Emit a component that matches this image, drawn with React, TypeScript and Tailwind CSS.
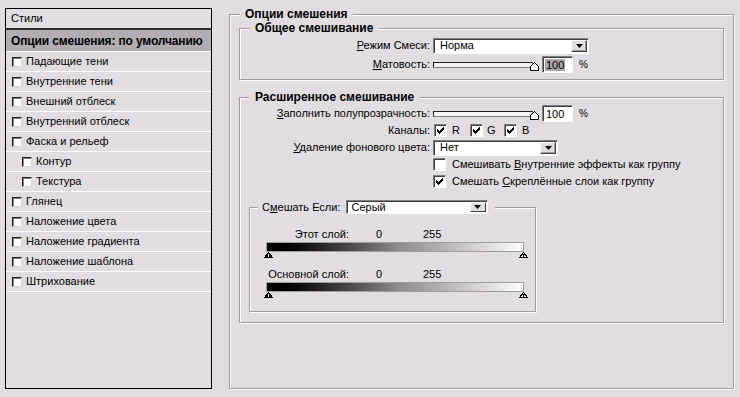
import React from 'react';

const effects = [
  { label: 'Падающие тени' },
  { label: 'Внутренние тени' },
  { label: 'Внешний отблеск' },
  { label: 'Внутренний отблеск' },
  { label: 'Фаска и рельеф' },
  { label: 'Контур', sub: true },
  { label: 'Текстура', sub: true },
  { label: 'Глянец' },
  { label: 'Наложение цвета' },
  { label: 'Наложение градиента' },
  { label: 'Наложение шаблона' },
  { label: 'Штрихование' },
];

// pixel check mark, 7x7
const checkCols = [2, 3, 4, 3, 2, 1, 0];

function SmallBox() {
  return (
    <span className="w-[10px] h-[10px] shrink-0 bg-white border border-t-[#202020] border-l-[#202020] border-r-[#d8d4d8] border-b-[#d8d4d8] shadow-[inset_1px_1px_0_#808080]" />
  );
}

function CheckBox({ checked }: { checked?: boolean }) {
  return (
    <span className="w-[13px] h-[13px] shrink-0 bg-white border border-t-[#808080] border-l-[#808080] border-r-white border-b-white shadow-[inset_1px_1px_0_#404040] flex items-center justify-center">
      {checked && (
        <svg width="7" height="7" viewBox="0 0 7 7" shapeRendering="crispEdges">
          {checkCols.map((y, x) => (
            <rect key={x} x={x} y={y} width="1" height="3" fill="#000" />
          ))}
        </svg>
      )}
    </span>
  );
}

function DropButton() {
  return (
    <span className="w-[16px] h-[12px] mr-[1px] bg-[#e1dde1] border border-t-white border-l-white border-r-[#404040] border-b-[#404040] shadow-[inset_-1px_-1px_0_#a09ca0] flex items-center justify-center">
      <svg width="7" height="4" viewBox="0 0 7 4">
        <polygon points="0,0 7,0 3.5,4" fill="#000" />
      </svg>
    </span>
  );
}

function Slider() {
  return (
    <span className="relative ml-[3px] w-[106px] h-[17px] flex items-center">
      <span className="w-[100px] h-[6px] bg-[#f4f2f4] border border-t-[#202020] border-l-[#202020] border-r-[#808080] border-b-[#808080]" />
      <svg className="absolute right-0 top-[6px]" width="9" height="9" viewBox="0 0 9 9" shapeRendering="crispEdges">
        <polygon points="0.5,4.5 4.5,0.5 8.5,4.5 8.5,8.5 0.5,8.5" fill="#fff" stroke="#000" strokeWidth="1" />
      </svg>
    </span>
  );
}

function NumBox({ selected }: { selected?: boolean }) {
  return (
    <>
      <span className="ml-[3px] w-[31px] h-[17px] bg-white border border-t-[#808080] border-l-[#808080] border-r-white border-b-white shadow-[inset_1px_1px_0_#404040] flex items-center pl-[2px]">
        <span className={selected ? 'bg-[#aaa6aa] px-[1px] leading-[12px]' : 'px-[1px] leading-[12px]'}>100</span>
      </span>
      <span className="ml-[6px] text-[10px]">%</span>
    </>
  );
}

function Marker({ filled }: { filled?: boolean }) {
  return (
    <svg width="9" height="6" viewBox="0 0 9 6" shapeRendering="crispEdges">
      <polygon points="4.5,0.5 8.5,5.5 0.5,5.5" fill={filled ? '#000' : '#fff'} stroke="#000" strokeWidth="1" />
      <rect x="4" y="2" width="1" height="3" fill={filled ? '#fff' : '#000'} />
    </svg>
  );
}

function BlendBar({ label }: { label: string }) {
  return (
    <>
      <div className="flex h-[14px] leading-[14px]">
        <span className="w-[85px] text-right">{label}</span>
        <span className="ml-[27px] w-[47px]">0</span>
        <span>255</span>
      </div>
      <div className="ml-[2px] mt-[1px] w-[258px] h-[10px] border border-[#a09ca0] bg-linear-to-r from-black via-[#8c888c] to-white" />
      <div className="w-[264px] h-[7px] flex justify-between items-start">
        <Marker filled />
        <Marker />
      </div>
    </>
  );
}

export default function App() {
  return (
    <div className="w-[740px] h-[397px] overflow-hidden bg-[#e1dde1] flex items-start pl-[5px] pt-[7px] text-[11px] text-black font-['Liberation_Sans',Arial,sans-serif]">
      {/* styles list */}
      <div className="w-[207px] h-[381px] mt-[1px] border border-black flex flex-col">
        <div className="h-[21px] pl-[5px] flex items-center border-b-2 border-[#303030]">Стили</div>
        <div className="h-[22px] pl-[5px] flex items-center bg-[#b1adb1] border-b border-white font-bold text-[12px] tracking-[-0.15px]">
          Опции смешения: по умолчанию
        </div>
        {effects.map((e) => (
          <div
            key={e.label}
            className={`h-[20px] flex items-center gap-[4px] border-b border-white ${e.sub ? 'pl-[16px]' : 'pl-[6px]'}`}
          >
            <SmallBox />
            <span>{e.label}</span>
          </div>
        ))}
      </div>

      {/* blending options */}
      <fieldset className="ml-[17px] w-[505px] h-[382px] border border-[#a09ca0] shadow-[1px_1px_0_#fff,inset_1px_1px_0_#fff]">
        <legend className="ml-[10px] px-[5px] bg-[#e1dde1] font-bold text-[12px] leading-[14px]">Опции смешения</legend>
        <div className="px-[9px] flex flex-col gap-[10px]">
          <fieldset className="border border-[#a09ca0] shadow-[1px_1px_0_#fff,inset_1px_1px_0_#fff]">
            <legend className="ml-[9px] px-[6px] bg-[#e1dde1] font-bold text-[12px] leading-[14px]">Общее смешивание</legend>
            <div className="pt-[2px] pb-[6px] flex flex-col gap-[2px]">
              <div className="h-[17px] flex items-center">
                <span className="w-[190px] text-right">
                  <u>Р</u>ежим Смеси:
                </span>
                <span className="ml-[3px] w-[156px] h-[16px] bg-white border border-t-[#808080] border-l-[#808080] border-r-white border-b-white shadow-[inset_1px_1px_0_#404040] flex items-center justify-between pl-[6px]">
                  <span>Норма</span>
                  <DropButton />
                </span>
              </div>
              <div className="h-[17px] flex items-center">
                <span className="w-[190px] text-right">
                  <u>М</u>атовость:
                </span>
                <Slider />
                <NumBox selected />
              </div>
            </div>
          </fieldset>

          <fieldset className="border border-[#a09ca0] shadow-[1px_1px_0_#fff,inset_1px_1px_0_#fff]">
            <legend className="ml-[9px] px-[6px] bg-[#e1dde1] font-bold text-[12px] leading-[14px]">Расширенное смешивание</legend>
            <div className="pt-[1px] pb-[10px] flex flex-col">
              <div className="h-[17px] flex items-center">
                <span className="w-[190px] text-right">
                  <u>З</u>аполнить полупрозрачность:
                </span>
                <Slider />
                <NumBox />
              </div>
              <div className="h-[17px] flex items-center">
                <span className="w-[190px] text-right">Каналы:</span>
                <span className="ml-[4px] flex items-center">
                  <CheckBox checked />
                  <span className="ml-[5px] w-[18px]">R</span>
                  <CheckBox checked />
                  <span className="ml-[4px] w-[17px]">G</span>
                  <CheckBox checked />
                  <span className="ml-[5px]">B</span>
                </span>
              </div>
              <div className="h-[17px] flex items-center">
                <span className="w-[190px] text-right">
                  <u>У</u>даление фонового цвета:
                </span>
                <span className="ml-[3px] w-[125px] h-[16px] bg-white border border-t-[#808080] border-l-[#808080] border-r-white border-b-white shadow-[inset_1px_1px_0_#404040] flex items-center justify-between pl-[6px]">
                  <span>Нет</span>
                  <DropButton />
                </span>
              </div>
              <div className="h-[17px] flex items-center pl-[193px] gap-[6px]">
                <CheckBox />
                <span>
                  Смешивать <u>В</u>нутренние эффекты как группу
                </span>
              </div>
              <div className="h-[17px] flex items-center pl-[193px] gap-[6px]">
                <CheckBox checked />
                <span>
                  Смешать <u>С</u>креплённые слои как группу
                </span>
              </div>

              <fieldset className="mt-[9px] ml-[9px] w-[287px] border border-[#a09ca0] shadow-[1px_1px_0_#fff,inset_1px_1px_0_#fff]">
                <legend className="ml-[8px] pl-[4px] pr-[7px] bg-[#e1dde1] flex items-center">
                  <span>
                    С<u>м</u>ешать Если:
                  </span>
                  <span className="ml-[5px] w-[142px] h-[14px] bg-white border border-t-[#808080] border-l-[#808080] border-r-white border-b-white shadow-[inset_1px_1px_0_#404040] flex items-center justify-between pl-[5px]">
                    <span className="leading-[12px]">Серый</span>
                    <span className="w-[16px] h-[10px] mr-[1px] bg-[#e1dde1] border border-t-white border-l-white border-r-[#404040] border-b-[#404040] flex items-center justify-center">
                      <svg width="7" height="4" viewBox="0 0 7 4">
                        <polygon points="0,0 7,0 3.5,4" fill="#000" />
                      </svg>
                    </span>
                  </span>
                </legend>
                <div className="pl-[14px] pt-[11px] pb-[12px] flex flex-col">
                  <BlendBar label="Этот слой:" />
                  <div className="mt-[8px] flex flex-col">
                    <BlendBar label="Основной слой:" />
                  </div>
                </div>
              </fieldset>
            </div>
          </fieldset>
        </div>
      </fieldset>
    </div>
  );
}
